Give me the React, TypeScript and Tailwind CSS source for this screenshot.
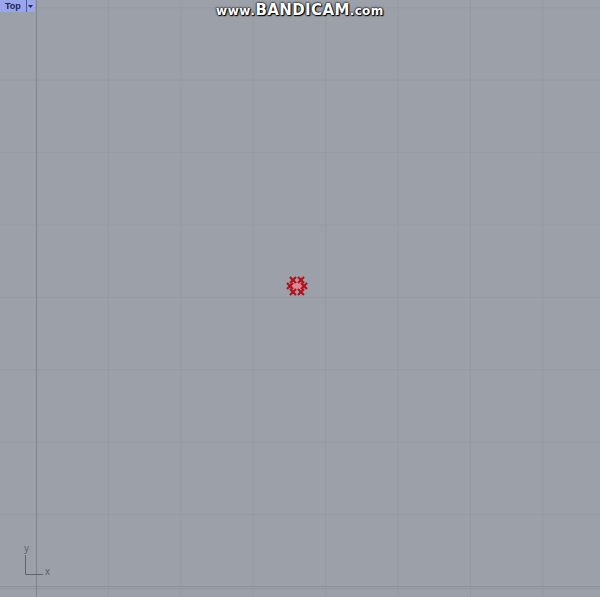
export default function App() {
  const vx = [108.4, 180.8, 253.2, 325.6, 398, 470.4, 542.8];
  const hy = [7.8, 80.2, 152.6, 225, 297.4, 369.8, 442.2, 514.6];

  return (
    <div className="relative w-[600px] h-[597px] overflow-hidden bg-[#9ca0a9] font-['Liberation_Sans',sans-serif]">
      {/* viewport grid */}
      <svg width="600" height="597" className="block">
        {hy.map(y => (
          <line key={"h" + y} x1="0" x2="600" y1={y} y2={y} stroke="#969aa3" strokeWidth="1" />
        ))}
        {vx.map(x => (
          <line key={"v" + x} x1={x} x2={x} y1="0" y2="597" stroke="#969aa3" strokeWidth="1" />
        ))}
        {/* world axes */}
        <line x1="0" x2="600" y1="586.5" y2="586.5" stroke="#8c9099" strokeWidth="1" />
        <line x1="0" x2="600" y1="588.5" y2="588.5" stroke="#91959e" strokeWidth="1" />
        <line x1="36.5" x2="36.5" y1="0" y2="597" stroke="#80848d" strokeWidth="1" />

        {/* red point cluster */}
        <g>
          <rect x="292" y="281" width="10" height="10" fill="#d98a94" />
          <g stroke="#b3101c" strokeWidth="2.2">
            {[
              [293, 280],
              [301, 280],
              [293, 292],
              [301, 292],
              [290, 286],
              [304, 286],
            ].map(([cx, cy]) => (
              <g key={cx + "-" + cy}>
                <line x1={cx - 3} y1={cy - 3} x2={cx + 3} y2={cy + 3} />
                <line x1={cx - 3} y1={cy + 3} x2={cx + 3} y2={cy - 3} />
              </g>
            ))}
          </g>
        </g>

        {/* axis icon */}
        <polyline points="25.5,555 25.5,574.5 43,574.5" fill="none" stroke="#60646c" strokeWidth="1" />
      </svg>

      <span className="absolute left-[24px] top-[544px] text-[10px] leading-none text-[#5c6068]">y</span>
      <span className="absolute left-[45px] top-[567px] text-[10px] leading-none text-[#5c6068]">x</span>

      {/* viewport title */}
      <div className="absolute left-0 top-0 flex h-[12px] items-center bg-[#99a6ec]">
        <span className="px-[5px] text-[9px] font-bold leading-none text-[#1c2452]">Top</span>
        <span className="flex h-full w-[9px] items-center justify-center border-l border-[#4c5690]">
          <svg width="5" height="3" viewBox="0 0 5 3">
            <path d="M0 0h5L2.5 3z" fill="#1c2452" />
          </svg>
        </span>
      </div>

      {/* watermark */}
      <div className="absolute left-[216px] top-[3px] flex items-baseline font-['DejaVu_Sans',sans-serif] font-bold leading-none text-white [text-shadow:0_0_2px_#000,0_0_2px_#000,1px_1px_1px_#000]">
        <span className="text-[12px] tracking-[0.6px]">www.</span>
        <span className="text-[15px] tracking-[0.4px]">BANDICAM</span>
        <span className="text-[12px] tracking-[0.3px]">.com</span>
      </div>
    </div>
  );
}
